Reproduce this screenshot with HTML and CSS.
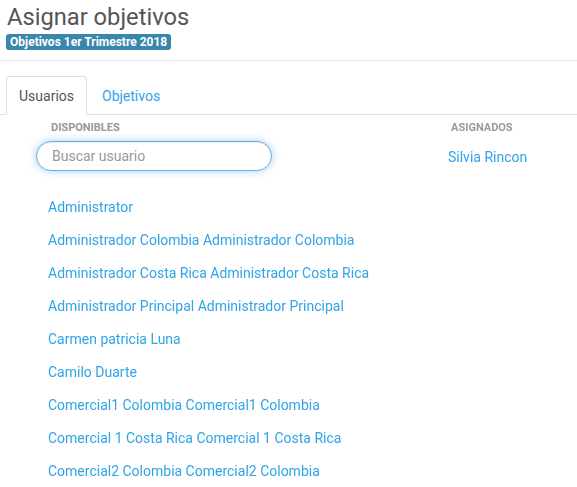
FILE: index.html
```html
<!DOCTYPE html>
<html lang="es">
<head>
<meta charset="utf-8">
<link rel="stylesheet" href="styles.css">
</head>
<body>
<header class="page-header">
  <h1 class="title">Asignar objetivos</h1>
  <span class="badge">Objetivos 1er Trimestre 2018</span>
</header>
<ul class="tabs">
  <li class="tab active">Usuarios</li>
  <li class="tab">Objetivos</li>
</ul>
<div class="columns">
  <section class="col-available">
    <h6 class="col-title">DISPONIBLES</h6>
    <input class="search" type="text" placeholder="Buscar usuario" autofocus>
    <ul class="user-list">
      <li><a href="#">Administrator</a></li>
      <li><a href="#">Administrador Colombia Administrador Colombia</a></li>
      <li><a href="#">Administrador Costa Rica Administrador Costa Rica</a></li>
      <li><a href="#">Administrador Principal Administrador Principal</a></li>
      <li><a href="#">Carmen patricia Luna</a></li>
      <li><a href="#">Camilo Duarte</a></li>
      <li><a href="#">Comercial1 Colombia Comercial1 Colombia</a></li>
      <li><a href="#">Comercial 1 Costa Rica Comercial 1 Costa Rica</a></li>
      <li><a href="#">Comercial2 Colombia Comercial2 Colombia</a></li>
    </ul>
  </section>
  <section class="col-assigned">
    <h6 class="col-title">ASIGNADOS</h6>
    <ul class="assigned-list">
      <li><a href="#">Silvia Rincon</a></li>
    </ul>
  </section>
</div>
</body>
</html>
```
FILE: styles.css
```css
html, body {
  margin: 0;
  padding: 0;
  background: #fff;
  font-family: Roboto, "Liberation Sans", sans-serif;
  color: #555;
  overflow: hidden;
}
.page-header {
  padding: 3px 7px 10px 7px;
  border-bottom: 1px solid #e8e8e8;
  display: flex;
  flex-direction: column;
  align-items: flex-start;
}
.title {
  margin: 0;
  font-size: 23.7px;
  font-weight: 400;
  line-height: 28px;
  color: #555;
}
.badge {
  margin-top: 3px;
  margin-left: -1px;
  background: #3a87ad;
  color: #fff;
  font-size: 12px;
  font-weight: 700;
  line-height: 16px;
  padding: 0 4px;
  border-radius: 3px;
}
.tabs {
  list-style: none;
  margin: 15px 0 0 0;
  padding: 0 0 0 6px;
  display: flex;
  border-bottom: 1px solid #ddd;
}
.tab {
  font-size: 14px;
  line-height: 20px;
  padding: 9px 12px 8px;
  color: #2fa4e7;
  border: 1px solid transparent;
  border-radius: 4px 4px 0 0;
  margin-bottom: -1px;
  margin-right: 2px;
}
.tab.active {
  color: #555;
  border-color: #ddd;
  border-bottom-color: #fff;
  background: #fff;
}
.columns {
  display: flex;
}
.col-available {
  width: 400px;
  padding-left: 36px;
}
.col-assigned {
  padding-left: 12px;
}
.col-title {
  margin: 7px 0 0 15px;
  font-size: 11px;
  font-weight: 700;
  line-height: 12px;
  color: #999;
}
.col-assigned .col-title {
  margin-left: 3px;
}
.search {
  display: block;
  margin-top: 7px;
  box-sizing: border-box;
  width: 236px;
  height: 30px;
  padding: 0 14px 0 15px;
  font-family: Roboto, "Liberation Sans", sans-serif;
  font-size: 14px;
  color: #555;
  border: 1px solid #66afe9;
  border-radius: 15px;
  outline: none;
  box-shadow: inset 0 1px 1px rgba(0,0,0,.075), 0 0 8px rgba(102,175,233,.6);
}
.search::placeholder {
  color: #999;
}
.user-list, .assigned-list {
  list-style: none;
  margin: 0;
  padding: 0;
}
.user-list {
  margin-top: 20px;
  margin-left: 12px;
}
.user-list li, .assigned-list li {
  font-size: 14px;
  line-height: 20px;
  padding: 6px 0 7px;
}
.assigned-list {
  margin-top: 7px;
}
a {
  color: #2fa4e7;
  text-decoration: none;
}
```
